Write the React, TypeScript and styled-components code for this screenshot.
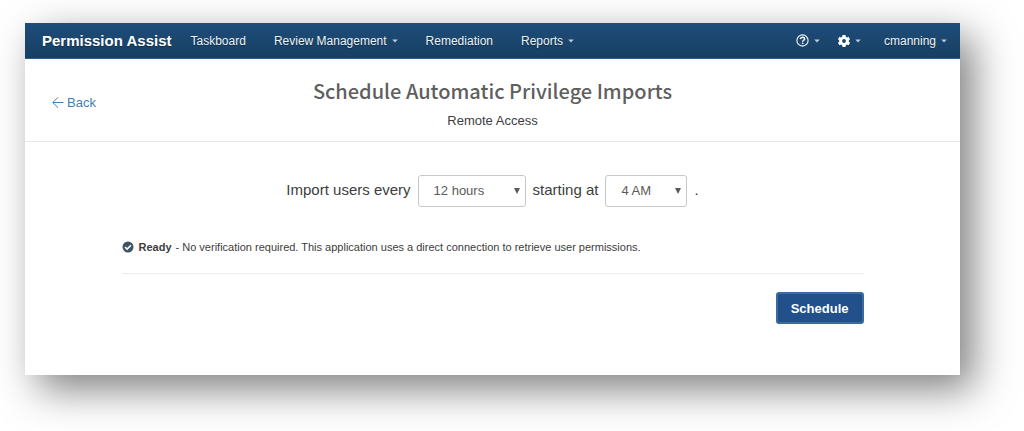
import React from 'react';
import styled, { createGlobalStyle } from 'styled-components';

const GlobalStyle = createGlobalStyle`
  *, *::before, *::after { box-sizing: border-box; }
  body {
    margin: 0;
    background: #fff;
    color: #3d3d3d;
    font-family: "Liberation Sans", Arial, sans-serif;
    font-size: 13px;
    line-height: 18px;
  }
`;

const Page = styled.div`
  padding: 23px 64px 56px 25px;
  overflow: hidden;
`;

const Window = styled.div`
  background: #fff;
  box-shadow: 13px 14px 38px rgba(0, 0, 0, 0.5);
`;

const Navbar = styled.nav`
  display: flex;
  align-items: center;
  height: 36px;
  padding: 0 13px 0 17px;
  background: linear-gradient(#1e4d7a, #173f62);
  border-bottom: 1px solid #2a5f8e;
  font-size: 12px;
  text-shadow: 0 1px 1px rgba(0, 0, 0, 0.35);
`;

const Brand = styled.a`
  margin-right: 19px;
  color: #fff;
  font-size: 15px;
  font-weight: bold;
  text-decoration: none;
`;

const NavGroup = styled.div<{ $gap: number }>`
  display: flex;
  align-items: center;
  gap: ${({ $gap }) => $gap}px;
`;

const Tools = styled(NavGroup)`
  margin-left: auto;
`;

const NavLink = styled.a`
  color: #eef2f6;
  text-decoration: none;
`;

const NavButton = styled.button`
  display: flex;
  align-items: center;
  gap: 5px;
  padding: 0;
  border: 0;
  background: none;
  color: #eef2f6;
  font: inherit;
  text-shadow: inherit;
  cursor: pointer;
`;

const Header = styled.header`
  display: grid;
  grid-template-columns: 1fr auto 1fr;
  align-items: center;
  height: 83px;
  padding: 5px 27px 0;
  border-bottom: 1px solid #e6e6e6;
`;

const BackLink = styled.a`
  display: flex;
  align-items: center;
  gap: 3px;
  color: #3f7fb5;
  text-decoration: none;
`;

const Heading = styled.div`
  text-align: center;
`;

const Title = styled.h1`
  margin: 0 0 6px;
  color: #5f5f5f;
  font-family: "Noto Sans CJK SC", "Open Sans", sans-serif;
  font-size: 20px;
  font-weight: 500;
  line-height: 30px;
`;

const Subtitle = styled.p`
  margin: 0;
`;

const Form = styled.form`
  max-width: 742px;
  margin: 0 auto;
  padding: 33px 0 51px;
`;

const ScheduleRow = styled.div`
  display: flex;
  justify-content: center;
  align-items: center;
  gap: 7px;
  font-size: 15px;
`;

const RowLabel = styled.label`
  padding-bottom: 3px;
`;

const SelectBox = styled.span<{ $width: number }>`
  display: grid;
  align-items: center;
  width: ${({ $width }) => $width}px;

  > * { grid-area: 1 / 1; }
  > svg { justify-self: end; margin-right: 6px; pointer-events: none; }
`;

const Select = styled.select`
  appearance: none;
  width: 100%;
  height: 32px;
  padding: 0 15px;
  border: 1px solid #c8c8c8;
  border-radius: 3px;
  background: #fff;
  color: #5a5a5a;
  font: inherit;
  font-size: 13px;
`;

const Status = styled.p`
  display: flex;
  align-items: center;
  gap: 4px;
  margin: 0;
  padding: 31px 0 17px;
  border-bottom: 1px solid #ececec;
  font-size: 11px;

  > svg { margin-right: 1px; }
`;

const Actions = styled.div`
  display: flex;
  justify-content: flex-end;
  padding-top: 18px;
`;

const SubmitButton = styled.button`
  height: 32px;
  padding: 0 13px;
  border: 2px solid #3c6c9e;
  border-radius: 3px;
  background: #21508a;
  color: #fff;
  font: bold 13px "Liberation Sans", Arial, sans-serif;
  cursor: pointer;
`;

const Caret = () => (
  <svg width="6" height="4" viewBox="0 0 6 4" aria-hidden="true">
    <path d="M0.3 0.5H5.7L3 3.5Z" fill="#bccbd9" />
  </svg>
);

const HelpIcon = () => (
  <svg width="13" height="13" viewBox="0 0 13 13" fill="none" stroke="#f4f7fa" aria-hidden="true">
    <circle cx="6.5" cy="6.5" r="5.6" strokeWidth="1.1" />
    <path d="M4.5 5.1C4.6 3.8 5.5 3.2 6.6 3.2C7.8 3.2 8.6 3.9 8.6 4.9C8.6 6.2 6.6 6.3 6.6 7.8" strokeWidth="1.5" />
    <path d="M6.6 8.6V10.1" strokeWidth="1.5" />
  </svg>
);

const GearIcon = () => (
  <svg width="12" height="12" viewBox="0 0 24 24" aria-hidden="true">
    <path
      fill="#fff"
      fillRule="evenodd"
      d="M9 0H15L15.7 3.5L18 4.8L21.3 3.7L24 8.6L21.5 10.8V13.2L24 15.4L21.3 20.3L18 19.2L15.7 20.5L15 24H9L8.3 20.5L6 19.2L2.7 20.3L0 15.4L2.5 13.2V10.8L0 8.6L2.7 3.7L6 4.8L8.3 3.5ZM12 8.2A3.8 3.8 0 1 0 12 15.8A3.8 3.8 0 1 0 12 8.2Z"
    />
  </svg>
);

const BackArrow = () => (
  <svg width="12" height="12" viewBox="0 0 12 12" fill="none" stroke="currentColor" aria-hidden="true">
    <path d="M11.5 5.5H1M6 0.3L0.8 5.5L6 10.7" />
  </svg>
);

const SelectArrow = () => (
  <svg width="6" height="6" viewBox="0 0 6 6" aria-hidden="true">
    <path d="M0 0H6L3 6Z" fill="#5a5a5a" />
  </svg>
);

const CheckIcon = () => (
  <svg width="12" height="12" viewBox="0 0 12 12" aria-hidden="true">
    <circle cx="6" cy="6" r="5.5" fill="#3c5560" />
    <path d="M3 6.1L5.1 8.1L9 4.2" fill="none" stroke="#fff" strokeWidth="1.6" />
  </svg>
);

export default function App() {
  return (
    <Page>
      <GlobalStyle />
      <Window>
        <Navbar>
          <Brand href="#">Permission Assist</Brand>
          <NavGroup $gap={28}>
            <NavLink href="#">Taskboard</NavLink>
            <NavButton type="button">Review Management <Caret /></NavButton>
            <NavLink href="#">Remediation</NavLink>
            <NavButton type="button">Reports <Caret /></NavButton>
          </NavGroup>
          <Tools $gap={23}>
            <NavGroup $gap={18}>
              <NavButton type="button" aria-label="Help"><HelpIcon /><Caret /></NavButton>
              <NavButton type="button" aria-label="Settings"><GearIcon /><Caret /></NavButton>
            </NavGroup>
            <NavButton type="button">cmanning <Caret /></NavButton>
          </Tools>
        </Navbar>
        <Header>
          <BackLink href="#"><BackArrow />Back</BackLink>
          <Heading>
            <Title>Schedule Automatic Privilege Imports</Title>
            <Subtitle>Remote Access</Subtitle>
          </Heading>
        </Header>
        <Form onSubmit={(event) => event.preventDefault()}>
          <ScheduleRow>
            <RowLabel htmlFor="interval">Import users every</RowLabel>
            <SelectBox $width={108}>
              <Select id="interval" defaultValue="12 hours">
                <option>12 hours</option>
              </Select>
              <SelectArrow />
            </SelectBox>
            <RowLabel htmlFor="start">starting at</RowLabel>
            <SelectBox $width={82}>
              <Select id="start" defaultValue="4 AM">
                <option>4 AM</option>
              </Select>
              <SelectArrow />
            </SelectBox>
            <RowLabel as="span">.</RowLabel>
          </ScheduleRow>
          <Status>
            <CheckIcon />
            <strong>Ready</strong>
            <span>- No verification required. This application uses a direct connection to retrieve user permissions.</span>
          </Status>
          <Actions>
            <SubmitButton type="submit">Schedule</SubmitButton>
          </Actions>
        </Form>
      </Window>
    </Page>
  );
}
